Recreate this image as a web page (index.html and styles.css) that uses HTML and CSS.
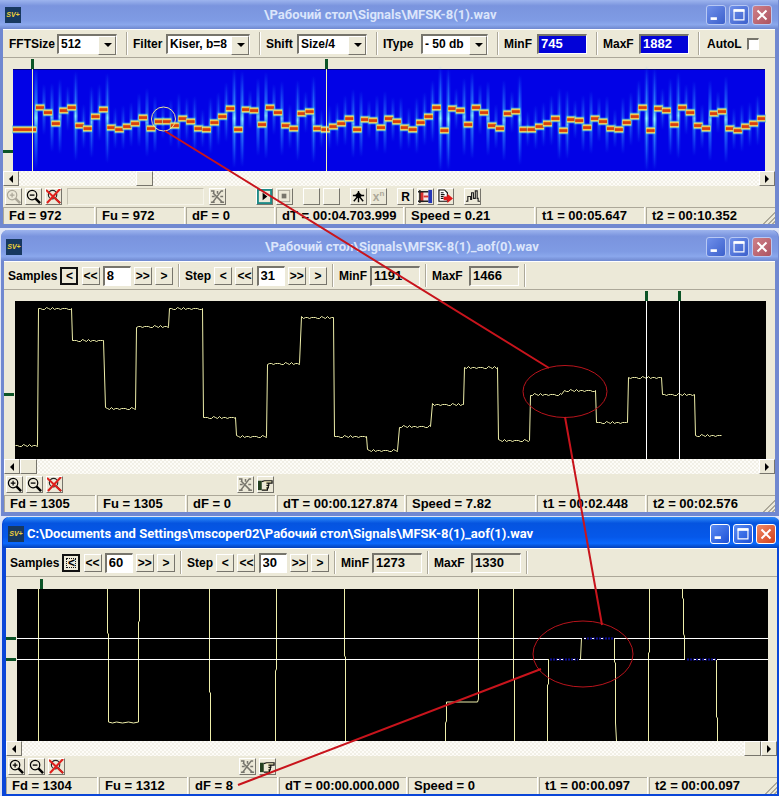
FILE: index.html
```html
<!DOCTYPE html>
<html lang="ru">
<head>
    <meta charset="UTF-8">
    <meta name="viewport" content="width=device-width, initial-scale=1.0">
    <title>MFSK-8(1).wav</title>
    <link rel="stylesheet" href="styles.css">
</head>
<body>
    <!-- Icons -->
    <svg class="defs" width="0" height="0" aria-hidden="true">
        <symbol id="zoomin" viewBox="0 0 16 16">
            <circle cx="6.500" cy="6.500" r="5" fill="none" stroke="currentColor" stroke-width="1.3"/>
            <path d="M10 10l5 5" stroke="currentColor" stroke-width="2.6"/>
            <path class="sign" d="M4 6.500h5M6.500 4v5" stroke="currentColor" stroke-width="1.3"/>
        </symbol>
        <symbol id="zoomout" viewBox="0 0 16 16">
            <circle cx="6.500" cy="6.500" r="5" fill="none" stroke="currentColor" stroke-width="1.3"/>
            <path d="M10 10l5 5" stroke="currentColor" stroke-width="2.6"/>
            <path d="M4 6.500h5" stroke="currentColor" stroke-width="1.4"/>
        </symbol>
        <symbol id="zoomoff" viewBox="0 0 16 16">
            <circle cx="7" cy="6" r="4.5" fill="none" stroke="#222" stroke-width="1.2"/>
            <path d="M10 10l5 5" stroke="#222" stroke-width="2"/>
            <path d="M0 1l15 14M15 0L1 15" stroke="#e0201c" stroke-width="2.2"/>
        </symbol>
        <symbol id="cut" viewBox="0 0 16 16">
            <path d="M1 2h3v3M3 4l10 10M14 2h-2L3 14M1 14h4M15 14h-4M8 2v3M5 8H2M11 8h3" fill="none" stroke="#77756c" stroke-width="1.6"/>
        </symbol>
        <symbol id="hand" viewBox="0 0 16 16">
            <path d="M0 4h4v10H0z" fill="#23401f"/>
            <path d="M4 5l3-1h8v2.500H9M9 6.500h2.500V9H9M9 9h2v2.500H9M9 11.500h1V14H4" fill="#f6f0c0" stroke="#111" stroke-width="1.300"/>
        </symbol>
        <symbol id="play" viewBox="0 0 16 16">
            <rect x="1" y="1" width="14" height="14" fill="none" stroke="#1d8a86" stroke-width="2"/>
            <path d="M6 4l5 4-5 4z" fill="#000"/>
        </symbol>
        <symbol id="stop" viewBox="0 0 16 16">
            <rect x="1.500" y="1.500" width="12" height="12" fill="none" stroke="#aaa799"/>
            <rect x="5" y="5" width="5" height="5" fill="#77756c"/>
        </symbol>
        <symbol id="star" viewBox="0 0 16 16">
            <path d="M8 2v12M2 7h12M8 7l-5 6M8 7l5 6" stroke="#000" stroke-width="1.500"/>
            <path d="M4 7l4-4 4 4-4 3z" fill="#000"/>
        </symbol>
        <symbol id="bars" viewBox="0 0 16 16">
            <rect x="2" y="3" width="4" height="11" fill="#d83030"/>
            <rect x="6" y="3" width="5" height="11" fill="#f6e4e4"/>
            <rect x="11" y="1" width="4" height="14" fill="#2436b8"/>
            <path d="M2 1v14M0 3h11M0 13h11" stroke="#222" stroke-width="1.500"/>
            <path d="M6 8h5" stroke="#d83030" stroke-width="2"/>
        </symbol>
        <symbol id="export" viewBox="0 0 16 16">
            <path d="M1 1h6l3 3v9H1zM3 4h3M3 6h4M3 8h3M3 10h3" fill="#fff" stroke="#111" stroke-width="1.200"/>
            <path d="M6 8h4V5l6 5-6 5v-3H6z" fill="#e01b1b"/>
        </symbol>
        <symbol id="wave" viewBox="0 0 16 16">
            <path d="M1 13h2V8h3v3h1V4h2v6h2V2h2v8h1v3h2" fill="none" stroke="#222" stroke-width="1.200"/>
        </symbol>
        <symbol id="left" viewBox="0 0 8 8"><path d="M6 0v8L2 4z"/></symbol>
        <symbol id="right" viewBox="0 0 8 8"><path d="M2 0v8l4-4z"/></symbol>
        <symbol id="min" viewBox="0 0 20 20"><path d="M4 14h7" stroke="#fff" stroke-width="3"/></symbol>
        <symbol id="max" viewBox="0 0 20 20"><path d="M4.500 4.500h11v11h-11z" fill="none" stroke="#fff" stroke-width="1.300"/><path d="M4 5h12" stroke="#fff" stroke-width="3"/></symbol>
        <symbol id="close" viewBox="0 0 20 20"><path d="M5 5l10 10M15 5L5 15" stroke="#fff" stroke-width="2.200"/></symbol>
        <linearGradient id="glow" x1="0" y1="0" x2="0" y2="1">
            <stop offset="0" stop-color="#28f" stop-opacity="0"/>
            <stop offset=".35" stop-color="#39f" stop-opacity=".7"/>
            <stop offset=".5" stop-color="#8ff"/>
            <stop offset=".65" stop-color="#39f" stop-opacity=".7"/>
            <stop offset="1" stop-color="#28f" stop-opacity="0"/>
        </linearGradient>
    </svg>

    <main class="desktop">
        <section class="window first">
            <header class="titlebar">
                <span class="logo">SV+</span>
                <h1 class="masked">\Рабочий стол\Signals\MFSK-8(1).wav</h1>
                <button class="caption" aria-label="Minimize"><svg><use href="#min"/></svg></button>
                <button class="caption" aria-label="Maximize"><svg><use href="#max"/></svg></button>
                <button class="caption close" aria-label="Close"><svg><use href="#close"/></svg></button>
            </header>
            <div class="toolbar fft">
                <div class="group"><label for="fft">FFTSize</label><span class="combo w60"><select id="fft"><option>512</option></select></span></div>
                <div class="group"><label for="filter">Filter</label><span class="combo w84"><select id="filter"><option>Kiser, b=8</option></select></span></div>
                <div class="group"><label for="shift">Shift</label><span class="combo w70"><select id="shift"><option>Size/4</option></select></span></div>
                <div class="group"><label for="itype">IType</label><span class="combo w67"><select id="itype"><option>- 50 db</option></select></span></div>
                <div class="group"><label for="minf1">MinF</label><input class="freq blue" id="minf1" value="745"></div>
                <div class="group"><label for="maxf1">MaxF</label><input class="freq blue" id="maxf1" value="1882"></div>
                <div class="group last"><label for="autol">AutoL</label><input type="checkbox" id="autol"></div>
            </div>
            <svg class="plot" id="spectrum" viewBox="3 58 772 113" preserveAspectRatio="none">
                <rect x="13" y="69" width="752" height="102" fill="#0202e6"/>
                <path d="M13 69.500h752" stroke="#00007a"/>
                <g id="bands"></g>
                <path d="M32.500 69v102M326.500 69v102" stroke="#f4f4b0"/>
                <path class="marker" d="M32.500 59v10M326.500 59v10M3 151.500h10"/>
            </svg>
            <div class="scroll">
                <button aria-label="Left"><svg><use href="#left"/></svg></button>
                <span class="thumb at-start"></span>
                <button aria-label="Right"><svg><use href="#right"/></svg></button>
            </div>
            <div class="tools">
                <div class="set">
                    <button disabled aria-label="Zoom in"><svg><use href="#zoomin"/></svg></button>
                    <button aria-label="Zoom out"><svg><use href="#zoomout"/></svg></button>
                    <button aria-label="Zoom off"><svg><use href="#zoomoff"/></svg></button>
                </div>
                <div class="progress"></div>
                <div class="set cutset"><button aria-label="Cut"><svg><use href="#cut"/></svg></button></div>
                <div class="set"><button aria-label="Play"><svg><use href="#play"/></svg></button><button aria-label="Stop"><svg><use href="#stop"/></svg></button></div>
                <div class="set"><button aria-label="Mark 1"></button><button aria-label="Mark 2"></button></div>
                <div class="set"><button aria-label="Star"><svg><use href="#star"/></svg></button><button disabled>x<sup>n</sup></button></div>
                <div class="set"><button>R</button><button aria-label="Levels"><svg><use href="#bars"/></svg></button><button aria-label="Export"><svg><use href="#export"/></svg></button></div>
                <div class="set"><button aria-label="Wave"><svg><use href="#wave"/></svg></button></div>
            </div>
            <footer class="status">
                <span>Fd = 972</span><span>Fu = 972</span><span>dF = 0</span><span>dT = 00:04.703.999</span><span>Speed = 0.21</span><span>t1 = 00:05.647</span><span class="grip">t2 = 00:10.352</span>
            </footer>
        </section>

        <section class="window second">
            <header class="titlebar">
                <span class="logo">SV+</span>
                <h1 class="masked">\Рабочий стол\Signals\MFSK-8(1)_aof(0).wav</h1>
                <button class="caption" aria-label="Minimize"><svg><use href="#min"/></svg></button>
                <button class="caption" aria-label="Maximize"><svg><use href="#max"/></svg></button>
                <button class="caption close" aria-label="Close"><svg><use href="#close"/></svg></button>
            </header>
            <div class="toolbar aof">
                <div class="group">
                    <label for="samples2">Samples</label>
                    <button class="default">&lt;</button><button>&lt;&lt;</button><input class="num" id="samples2" value="8"><button>&gt;&gt;</button><button>&gt;</button>
                </div>
                <div class="group">
                    <label for="step2">Step</label>
                    <button>&lt;</button><button>&lt;&lt;</button><input class="num" id="step2" value="31"><button>&gt;&gt;</button><button>&gt;</button>
                </div>
                <div class="group"><label for="minf2">MinF</label><input class="freq" id="minf2" value="1191" readonly></div>
                <div class="group"><label for="maxf2">MaxF</label><input class="freq" id="maxf2" value="1466" readonly></div>
            </div>
            <svg class="plot" id="trace" viewBox="4 290 771 169" preserveAspectRatio="none">
                <rect x="15" y="301" width="751" height="158"/>
                <path id="steps" class="line"/>
                <path d="M646.500 301v158M679.500 301v158" stroke="#fff"/>
                <path class="marker" d="M646.500 291v10M679.500 291v10M4 394.500h10"/>
            </svg>
            <div class="scroll">
                <button aria-label="Left"><svg><use href="#left"/></svg></button>
                <span class="thumb"></span>
                <button aria-label="Right"><svg><use href="#right"/></svg></button>
            </div>
            <div class="tools short">
                <div class="set red">
                    <button aria-label="Zoom in"><svg><use href="#zoomin"/></svg></button>
                    <button aria-label="Zoom out"><svg><use href="#zoomout"/></svg></button>
                    <button aria-label="Zoom off"><svg><use href="#zoomoff"/></svg></button>
                </div>
                <div class="set"><button aria-label="Cut"><svg><use href="#cut"/></svg></button><button aria-label="Hand"><svg><use href="#hand"/></svg></button></div>
            </div>
            <footer class="status">
                <span>Fd = 1305</span><span>Fu = 1305</span><span>dF = 0</span><span>dT = 00:00.127.874</span><span>Speed = 7.82</span><span>t1 = 00:02.448</span><span class="grip">t2 = 00:02.576</span>
            </footer>
        </section>

        <section class="window active">
            <header class="titlebar">
                <span class="logo">SV+</span>
                <h1>C:\Documents and Settings\mscoper02\Рабочий стол\Signals\MFSK-8(1)_aof(1).wav</h1>
                <button class="caption" aria-label="Minimize"><svg><use href="#min"/></svg></button>
                <button class="caption" aria-label="Maximize"><svg><use href="#max"/></svg></button>
                <button class="caption close" aria-label="Close"><svg><use href="#close"/></svg></button>
            </header>
            <div class="toolbar aof">
                <div class="group">
                    <label for="samples3">Samples</label>
                    <button class="default focused">&lt;</button><button>&lt;&lt;</button><input class="num" id="samples3" value="60"><button>&gt;&gt;</button><button>&gt;</button>
                </div>
                <div class="group">
                    <label for="step3">Step</label>
                    <button>&lt;</button><button>&lt;&lt;</button><input class="num" id="step3" value="30"><button>&gt;&gt;</button><button>&gt;</button>
                </div>
                <div class="group"><label for="minf3">MinF</label><input class="freq" id="minf3" value="1273" readonly></div>
                <div class="group"><label for="maxf3">MaxF</label><input class="freq" id="maxf3" value="1330" readonly></div>
            </div>
            <svg class="plot" id="detail" viewBox="6 577 771 164" preserveAspectRatio="none">
                <rect x="17" y="589" width="751" height="152"/>
                <path class="line" d="M38.500 589v152M107.500 589v44l1 1v88l4 1 4-1 6 1 6-1 5 1 5-1V622l1-1v-32M209.500 589v103l1 1v48M276.500 589v80l-1 2v70M344.500 589v67l1 1v84M445.500 741v-18l1-2v-19h31l1-3V589M513.500 589v90l1 1v61M547.500 741v-56l1-1v-25M580.500 659l1-21M614.500 638v24l1 1v60l1 18M649.500 589v63l-1 1v88M682.500 589v9l1 1v35l1 2v23M716.500 660v57l1 1v23"/>
                <path d="M17 638.500h565M614 638.500h154M17 659.500h531M579 659.500h106M717 659.500h51" stroke="#fff"/>
                <path d="M584 638.500h30M550 659.500h28M687 659.500h29" stroke="#10109a" stroke-width="2" stroke-dasharray="2 1"/>
                <path d="M584 638.500h2M592 638.500h2M601 638.500h2M557 659.500h2M561 659.500h2M573 659.500h2M694 659.500h2M698 659.500h2M704 659.500h2M713 659.500h2" stroke="#fff"/>
                <path class="marker" d="M41.500 579v10M6 638.500h10M6 659.500h10"/>
            </svg>
            <div class="scroll">
                <button aria-label="Left"><svg><use href="#left"/></svg></button>
                <span class="thumb at-end"></span>
                <button aria-label="Right"><svg><use href="#right"/></svg></button>
            </div>
            <div class="tools short">
                <div class="set red">
                    <button aria-label="Zoom in"><svg><use href="#zoomin"/></svg></button>
                    <button aria-label="Zoom out"><svg><use href="#zoomout"/></svg></button>
                    <button aria-label="Zoom off"><svg><use href="#zoomoff"/></svg></button>
                </div>
                <div class="set"><button aria-label="Cut"><svg><use href="#cut"/></svg></button><button aria-label="Hand"><svg><use href="#hand"/></svg></button></div>
            </div>
            <footer class="status">
                <span>Fd = 1304</span><span>Fu = 1312</span><span>dF = 8</span><span>dT = 00:00.000.000</span><span>Speed = 0</span><span>t1 = 00:00.097</span><span class="grip">t2 = 00:00.097</span>
            </footer>
        </section>

        <!-- Callouts from one window to the next -->
        <svg class="callouts" viewBox="0 0 779 796" preserveAspectRatio="none">
            <circle cx="163.500" cy="119" r="12" stroke="#e8e49a"/>
            <ellipse cx="565" cy="391.500" rx="42" ry="26"/>
            <ellipse cx="583" cy="654" rx="50" ry="33"/>
            <path d="M165 131L549 368M565 417l37 208M541 669L238 785"/>
        </svg>
    </main>

    <script src="plots.js"></script>
</body>
</html>
```
FILE: styles.css
```css
* {
    box-sizing: border-box;
}
body {
    margin: 0;
    background-color: #dfe5f6;
    font-family: "Liberation Sans", Arial, sans-serif;
    font-size: 12px;
    font-weight: bold;
    color: #000;
}
.defs {
    position: absolute;
}
.desktop {
    position: relative;
    overflow: hidden;
}
.window {
    background-color: #ece9d8;
    border: 4px solid #7088d0;
    border-width: 0 4px 4px 3px;
}
.second {
    margin: 2px 0 1px 1px;
    border-radius: 7px 7px 0 0;
}
.active {
    margin-left: 2px;
    border-color: #0a46d8;
    border-width: 0 2px 2px 4px;
    border-radius: 7px 7px 0 0;
}

/* title bar */
.titlebar {
    display: flex;
    align-items: center;
    gap: 3px;
    height: 31px;
    margin: 0 -3px;
    padding: 2px 6px 0 5px;
    background: linear-gradient(#9db4ee, #7a94de 20%, #7f9be4 70%, #8aa7ec 85%, #6f88cf);
    border-radius: 7px 7px 0 0;
}
.first .titlebar {
    height: 29px;
    padding-top: 0;
    border-radius: 0;
}
.active .titlebar {
    background: linear-gradient(#2f8cf8, #0554e0 20%, #0558ea 65%, #0a68fc 85%, #0340b8);
    padding-right: 4px;
}
.titlebar h1 {
    flex: 1;
    margin: 0;
    font: bold 13px/16px Roboto, "Open Sans", sans-serif;
    color: #dbe5fb;
    white-space: nowrap;
}
.titlebar h1.masked {
    padding-left: 240px;
}
.active h1 {
    color: #fff;
}
.logo {
    width: 16px;
    height: 16px;
    background-color: #17385f;
    font: italic bold 7px/16px "Liberation Sans", Arial, sans-serif;
    text-align: center;
    color: #f0cf3a;
}
.caption {
    width: 20px;
    height: 20px;
    padding: 0;
    border: 1px solid #b7c8f4;
    border-radius: 3px;
    background: linear-gradient(135deg, #6f90ea, #3c60cc);
}
.caption.close {
    background: linear-gradient(135deg, #cf8088, #ad5462);
}
.active .caption {
    border-color: #fff;
    background: linear-gradient(135deg, #5a8cf4, #1c4fd6);
}
.active .caption.close {
    background: linear-gradient(135deg, #f08a66, #d2401c);
}
.caption svg {
    display: block;
    width: 18px;
    height: 18px;
}

/* toolbar */
.toolbar {
    display: grid;
    height: 29px;
    border-bottom: 1px solid #aca899;
    border-top: 1px solid #fff;
}
.fft {
    grid-template-columns: 124px 133px 117px 121px 99px 102px 1fr;
}
.aof {
    grid-template-columns: 175px 154px 93px 99px;
}
.group {
    display: flex;
    align-items: center;
    justify-content: space-between;
    margin: 2px 0;
    padding: 0 9px 0 6px;
    border-right: 1px solid #aca899;
    box-shadow: 1px 0 #fff;
}
.group.last {
    justify-content: flex-start;
    gap: 5px;
    padding-left: 8px;
    border: none;
    box-shadow: none;
}
.aof .group {
    padding: 0 5px 0 4px;
}
.aof .group + .group {
    padding-left: 6px;
}
.combo {
    position: relative;
    display: block;
    height: 20px;
    border: 1px solid #fff;
    border-top: 2px solid #77756c;
    border-left: 2px solid #77756c;
    background-color: #fff;
}
.w60 { width: 60px; }
.w67 { width: 67px; }
.w70 { width: 70px; }
.w84 { width: 84px; }
.combo select {
    appearance: none;
    width: 100%;
    height: 17px;
    padding: 0 0 0 2px;
    border: none;
    background: none;
    font: inherit;
    color: inherit;
}
.combo::before {
    content: "";
    position: absolute;
    top: 0;
    right: 0;
    width: 16px;
    height: 17px;
    background-color: #ece9d8;
    border: 1px solid #fff;
    border-right-color: #77756c;
    border-bottom-color: #77756c;
}
.combo::after {
    content: "";
    position: absolute;
    top: 7px;
    right: 4px;
    border: 4px solid transparent;
    border-top-color: #000;
    border-bottom: none;
}
.freq, .num {
    width: 50px;
    height: 20px;
    padding: 0 2px 2px;
    border: 1px solid #fff;
    border-top: 2px solid #77756c;
    border-left: 2px solid #77756c;
    background-color: #ece9d8;
    font: bold 13px "Liberation Sans", Arial, sans-serif;
    color: #000;
}
.num {
    width: 28px;
    background-color: #fff;
}
.blue {
    background-color: #0202d8;
    color: #fff;
}
.toolbar input[type="checkbox"] {
    appearance: none;
    width: 12px;
    height: 12px;
    margin: 0;
    background-color: #fff;
    border: 1px solid #fff;
    border-top: 2px solid #77756c;
    border-left: 2px solid #77756c;
}
.aof button, .tools button, .scroll button, .thumb {
    padding: 0;
    background-color: #ece9d8;
    border: 1px solid #fff;
    border-right-color: #77756c;
    border-bottom-color: #77756c;
    font: bold 12px/14px "Liberation Sans", Arial, sans-serif;
    color: #000;
}
.aof button {
    width: 18px;
    height: 18px;
}
.aof .default {
    border: 2px solid #111;
}
.aof .focused {
    outline: 1px dotted #111;
    outline-offset: -5px;
}

/* plots */
.plot {
    display: block;
    width: 100%;
}
#spectrum { height: 113px; }
#trace { height: 169px; }
#detail { height: 164px; }
.line {
    fill: none;
    stroke: #eeeeaa;
}
.marker {
    fill: none;
    stroke: #0c5426;
    stroke-width: 3;
}

/* scroll bar */
.scroll {
    display: flex;
    height: 15px;
    background: repeating-conic-gradient(#fdfcf8 0 25%, #f1efe6 0 50%) 0 0 / 4px 4px;
}
.scroll button {
    width: 16px;
    height: 15px;
}
.scroll svg {
    display: block;
    width: 8px;
    height: 8px;
    margin: auto;
}
.scroll button:last-child {
    margin-left: auto;
}
.thumb {
    width: 17px;
}
.thumb.at-start {
    margin-left: 117px;
}
.thumb.at-end {
    margin-left: auto;
}
.scroll .at-end + button {
    margin-left: 0;
}

/* icon row */
.tools {
    display: flex;
    align-items: center;
    gap: 10px;
    height: 21px;
    padding-left: 2px;
}
.set {
    display: flex;
    gap: 3px;
}
.tools button {
    width: 17px;
    height: 17px;
}
.tools button:disabled {
    color: #aca899;
}
.tools sup {
    font-size: 8px;
    line-height: 1px;
}
.tools svg {
    display: block;
    width: 15px;
    height: 15px;
}
.progress {
    width: 137px;
    height: 17px;
    margin-left: -5px;
    border: 1px solid #c4c0b0;
    border-right-color: #f6f4ea;
    border-bottom-color: #f6f4ea;
}
.cutset {
    margin: 0 20px 0 -5px;
}
.short {
    gap: 174px;
}
.red .sign {
    stroke: #c01818;
}

/* status bar */
.status {
    display: grid;
    grid-template-columns: 91px 88px 88px 127px 129px 108px 1fr;
    gap: 2px;
    height: 17px;
    font-size: 13px;
    line-height: 16px;
}
.status span {
    padding-left: 5px;
    border-top: 1px solid #aca899;
    border-left: 1px solid #aca899;
    box-shadow: 1px 0 #fff;
    white-space: nowrap;
}
.status .grip {
    box-shadow: none;
    background: linear-gradient(135deg, transparent 50%, #aca899 50% 58%, transparent 58% 68%, #aca899 68% 76%, transparent 76% 86%, #aca899 86% 94%, transparent 94%) right bottom / 12px 12px no-repeat;
}

/* callouts */
.callouts {
    position: absolute;
    top: 0;
    left: 0;
    width: 100%;
    height: 100%;
    fill: none;
    stroke: #b8141c;
    pointer-events: none;
}
.callouts path {
    stroke: #c8141c;
    stroke-width: 2;
}
```
FILE: plots.js
```js
const SVG = 'http://www.w3.org/2000/svg';

// Tone levels of the spectrogram, one per symbol
const tones = [
    107, 112, 123, 110, 107, 125, 128, 116, 109, 127, 129, 126, 123, 117, 128, 121,
    121, 125, 118, 121, 128, 129, 122, 116, 108, 129, 109, 110, 124, 107, 112, 125,
    128, 113, 111, 128, 129, 126, 123, 118, 129, 119, 120, 127, 118, 121, 127, 129,
    122, 116, 107, 130, 108, 110, 124, 107, 112, 125, 128, 113, 111, 129, 129, 126,
    123, 118, 130, 119, 120, 127, 118, 121, 128, 129, 122, 116, 107, 130, 108, 110,
    124, 107, 112, 125, 128, 113, 111, 128, 130, 126, 123, 118
];
const toneWidth = 7.93;
const bands = document.getElementById('bands');

function rect(x, y, width, height, fill, opacity) {
    const el = document.createElementNS(SVG, 'rect');
    el.setAttribute('x', x);
    el.setAttribute('y', y);
    el.setAttribute('width', width);
    el.setAttribute('height', height);
    el.setAttribute('fill', fill);
    el.setAttribute('opacity', opacity);
    bands.appendChild(el);
}

// glow at each change of tone
tones.forEach((y, i) => {
    const x = 36 + i * toneWidth;
    const prev = i ? tones[i - 1] : 129;
    const jump = Math.abs(y - prev);
    const reach = 18 + jump * 1.5;
    const mid = (y + prev) / 2;
    rect(x - 2, mid - reach, 4, reach * 2, 'url(#glow)', 0.25 + jump / 60);
    rect(x - 0.7, mid - reach, 1.4, reach * 2, 'url(#glow)', 0.35 + jump / 35);
});

function tone(x, y, width) {
    rect(x - 1, y - 4, width + 2, 8, '#20a8f0', 0.6);
    rect(x - 0.5, y - 3, width + 1, 6, '#f0f080', 1);
    rect(x, y - 2, width, 4, '#f0a020', 1);
    rect(x, y - 1.2, width, 2.6, '#d83c10', 1);
}
tone(13, 129.5, 23);
tones.forEach((y, i) => {
    const x = 36 + i * toneWidth;
    tone(x, y + 0.5, Math.min(toneWidth, 765 - x));
});

// Frequency trace: [start, end, level]
const levels = [
    [15, 37, 445], [38, 71, 308], [72, 103, 340], [105, 135, 408], [136, 168, 326],
    [169, 202, 308], [203, 235, 417], [236, 266, 436], [267, 299, 363], [301, 333, 317],
    [334, 366, 436], [367, 397, 450], [399, 430, 426], [432, 463, 404], [464, 497, 367],
    [498, 529, 440], [530, 561, 394], [564, 595, 390], [596, 627, 422], [628, 661, 377],
    [662, 694, 394], [695, 721, 435]
];
const noise = [0, 1, 0, -1, 0, 1, 1, 0, 1, 0, -1, 1, 0];
let d = '';
levels.forEach(([start, end, level], n) => {
    for (let x = start; x <= end; x += 2) {
        const y = level + 0.5 + noise[(x + n * 3) % noise.length];
        d += `${d ? 'L' : 'M'}${x + 0.5} ${y}`;
    }
    d += `L${end + 0.5} ${level + 0.5}`;
});
document.getElementById('steps').setAttribute('d', d);
```
